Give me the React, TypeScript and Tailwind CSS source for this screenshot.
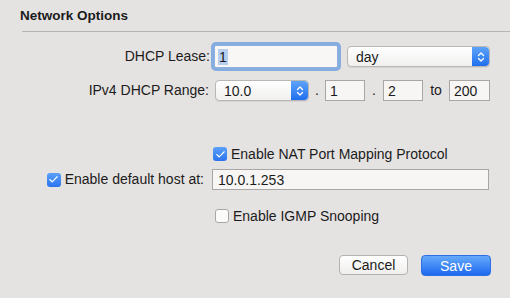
import { Check } from 'lucide-react'

function Stepper() {
  return (
    <span className="flex h-full w-[17px] items-center justify-center rounded-r-[4px] bg-gradient-to-b from-[#5ea3f8] to-[#1f6ef0]">
      <svg width="8" height="12" viewBox="0 0 8 12" fill="none" stroke="white" strokeWidth="1.3" strokeLinecap="round" strokeLinejoin="round">
        <path d="M1.5 4.5 L4 2 L6.5 4.5" />
        <path d="M1.5 7.5 L4 10 L6.5 7.5" />
      </svg>
    </span>
  )
}

function Select({ value, className }: { value: string; className: string }) {
  return (
    <div className={`flex h-[21px] items-center rounded-[4px] border border-[#b9b7b6] bg-gradient-to-b from-white to-[#f1f0ef] shadow-[0_1px_0_rgba(0,0,0,0.06)] ${className}`}>
      <span className="flex-1 pl-[8px] leading-none">{value}</span>
      <Stepper />
    </div>
  )
}

function Field({ value, className }: { value: string; className: string }) {
  return (
    <div className={`flex h-[21px] items-center border border-[#a9a7a6] bg-[#f7f6f5] pl-[4px] leading-none ${className}`}>
      {value}
    </div>
  )
}

function CheckBox({ checked }: { checked: boolean }) {
  return checked ? (
    <span className="flex h-[14px] w-[14px] items-center justify-center rounded-[3px] bg-gradient-to-b from-[#5aa0f8] to-[#2d73ef]">
      <Check className="h-[11px] w-[11px] text-white" strokeWidth={2.5} />
    </span>
  ) : (
    <span className="h-[14px] w-[14px] rounded-[3px] border border-[#a9a7a6] bg-[#fbfbfa]" />
  )
}

export default function App() {
  return (
    <div className="flex h-[298px] w-[510px] flex-col bg-[#e5e3e2] font-['Liberation_Sans',Arial,sans-serif] text-[14px] text-[#1b1b1b]">
      <div className="pl-[20px] pt-[8px] text-[13.5px] font-bold leading-4">Network Options</div>
      <div className="ml-[22px] mt-[7px] h-px bg-[#b7b5b4]" />

      <div className="mt-[13px] flex h-[23px] items-center">
        <span className="w-[210px] text-right">DHCP Lease:</span>
        <div className="ml-[4px] flex h-[23px] w-[124px] items-center rounded-[2px] border border-[#8fb0dd] bg-[#f8f7f6] pl-[3px] shadow-[0_0_0_3px_#86addf]">
          <span className="bg-[#b6cff0] px-px leading-4">1</span>
        </div>
        <Select value="day" className="ml-[9px] w-[143px]" />
      </div>

      <div className="mt-[12px] flex h-[21px] items-center">
        <span className="w-[209px] text-right">IPv4 DHCP Range:</span>
        <Select value="10.0" className="ml-[6px] w-[94px]" />
        <span className="w-[16px] text-center">.</span>
        <Field value="1" className="w-[40px]" />
        <span className="w-[18px] text-center">.</span>
        <Field value="2" className="w-[40px]" />
        <span className="w-[26px] text-center">to</span>
        <Field value="200" className="w-[41px]" />
      </div>

      <div className="mt-[46px] flex h-[14px] items-center gap-[4px] pl-[213px]">
        <CheckBox checked />
        <span>Enable NAT Port Mapping Protocol</span>
      </div>

      <div className="mt-[8px] flex h-[21px] items-center">
        <div className="flex w-[204px] items-center justify-end gap-[4px]">
          <CheckBox checked />
          <span>Enable default host at:</span>
        </div>
        <Field value="10.0.1.253" className="ml-[8px] w-[277px] pl-[5px]" />
      </div>

      <div className="mt-[19px] flex h-[14px] items-center gap-[4px] pl-[215px]">
        <CheckBox checked={false} />
        <span>Enable IGMP Snooping</span>
      </div>

      <div className="mt-[32px] flex justify-end gap-[13px] pr-[19px]">
        <button className="h-[20px] w-[69px] rounded-[4px] border border-[#b4b2b1] bg-gradient-to-b from-white to-[#f0efee] leading-none text-[#1b1b1b]">
          Cancel
        </button>
        <button className="h-[21px] w-[70px] rounded-[4px] border border-[#2c6fe6] bg-gradient-to-b from-[#66a9fa] to-[#1c67ef] leading-none text-white">
          Save
        </button>
      </div>
    </div>
  )
}
